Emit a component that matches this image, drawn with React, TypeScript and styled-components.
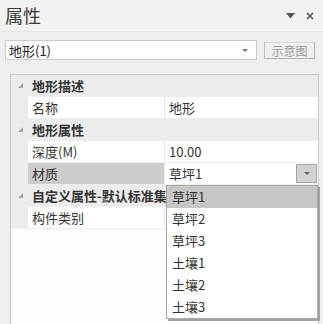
import React from 'react';
import styled, { createGlobalStyle } from 'styled-components';

const GlobalStyle = createGlobalStyle`
  html, body {
    margin: 0;
    padding: 0;
    background: #f0f0f0;
  }
  body {
    font-family: "Noto Sans CJK SC", "DejaVu Sans", sans-serif;
  }
`;

const Panel = styled.div`
  position: relative;
  width: 323px;
  height: 324px;
  background: #efefef;
  overflow: hidden;
  display: flex;
  flex-direction: column;
`;

const TitleBar = styled.div`
  height: 32px;
  display: flex;
  align-items: center;
  justify-content: space-between;
  padding: 0 9px 0 5px;
  background: #f2f2f2;
  border-bottom: 1px solid #e4e4e4;
  box-sizing: border-box;
`;

const Title = styled.div`
  font-size: 18px;
  color: #3a3a3a;
  line-height: 1;
  margin-top: -2px;
`;

const TitleTools = styled.div`
  display: flex;
  align-items: center;
  gap: 11px;
  color: #555;
`;

const Toolbar = styled.div`
  height: 36px;
  display: flex;
  align-items: center;
  padding: 0 8px 0 5px;
  gap: 7px;
  box-sizing: border-box;
`;

const Combo = styled.div`
  width: 252px;
  height: 20px;
  box-sizing: border-box;
  background: #fff;
  border: 1px solid #cbcbcb;
  display: flex;
  align-items: center;
  justify-content: space-between;
  padding: 0 8px 0 3px;
  font-size: 13px;
  color: #222;
`;

const ComboArrow = styled.span`
  width: 0;
  height: 0;
  border-left: 3px solid transparent;
  border-right: 3px solid transparent;
  border-top: 3px solid #777;
`;

const ViewButton = styled.div`
  width: 51px;
  height: 17px;
  box-sizing: border-box;
  border: 1px solid #b4b4b4;
  border-top-color: #d8d8d8;
  border-left-color: #bdbdbd;
  display: flex;
  align-items: center;
  justify-content: center;
  font-size: 12px;
  color: #9c9c9c;
  letter-spacing: 0;
`;

const GridWrap = styled.div`
  margin: 6px 4px 0 10px;
  flex: 1;
  background: #fdfdfd;
  border: 1px solid #cacaca;
  border-bottom: none;
  display: flex;
  flex-direction: column;
`;

const Row = styled.div<{ $cat?: boolean }>`
  height: 22px;
  display: flex;
  box-sizing: border-box;
  border-bottom: 1px solid #eeeeee;
  background: ${p => (p.$cat ? '#ececec' : '#fff')};
  font-size: 13px;
  line-height: 21px;
  white-space: nowrap;
`;

const Gutter = styled.div`
  width: 17px;
  flex: none;
  background: #ececec;
  display: flex;
  align-items: center;
  justify-content: center;
`;

const Expander = styled.span`
  width: 0;
  height: 0;
  margin-left: 2px;
  border-left: 5px solid transparent;
  border-bottom: 5px solid #a6a6a6;
`;

const CatLabel = styled.div`
  padding-left: 4px;
  font-weight: bold;
  color: #333;
  overflow: hidden;
`;

const NameCell = styled.div<{ $sel?: boolean }>`
  width: 137px;
  flex: none;
  box-sizing: border-box;
  padding-left: 4px;
  border-right: 1px solid #e6e6e6;
  background: ${p => (p.$sel ? '#cccccc' : '#fff')};
  color: #333;
`;

const ValueCell = styled.div`
  flex: 1;
  display: flex;
  align-items: center;
  justify-content: space-between;
  padding: 0 1px 0 4px;
  color: #333;
`;

const DropButton = styled.div`
  width: 21px;
  height: 19px;
  box-sizing: border-box;
  background: #d2d2d2;
  border: 1px solid #a4a4a4;
  display: flex;
  align-items: center;
  justify-content: center;
`;

const DropArrow = styled.span`
  width: 0;
  height: 0;
  border-left: 3px solid transparent;
  border-right: 3px solid transparent;
  border-top: 3px solid #666;
`;

const Popup = styled.div`
  position: absolute;
  left: 166px;
  top: 185px;
  width: 152px;
  box-sizing: border-box;
  background: #fff;
  border: 1px solid #a8a8a8;
  box-shadow: 2px 2px 0 #a3a3a3;
  display: flex;
  flex-direction: column;
`;

const Option = styled.div<{ $active?: boolean }>`
  height: 22px;
  line-height: 22px;
  padding-left: 5px;
  font-size: 13px;
  color: #333;
  background: ${p => (p.$active ? '#c6c6c6' : '#fff')};
`;

type Item =
  | { kind: 'cat'; label: string }
  | { kind: 'prop'; name: string; value: string; selected?: boolean };

const items: Item[] = [
  { kind: 'cat', label: '地形描述' },
  { kind: 'prop', name: '名称', value: '地形' },
  { kind: 'cat', label: '地形属性' },
  { kind: 'prop', name: '深度(M)', value: '10.00' },
  { kind: 'prop', name: '材质', value: '草坪1', selected: true },
  { kind: 'cat', label: '自定义属性-默认标准集' },
  { kind: 'prop', name: '构件类别', value: '' },
];

const options = ['草坪1', '草坪2', '草坪3', '土壤1', '土壤2', '土壤3'];

const App: React.FC = () => {
  return (
    <Panel>
      <GlobalStyle />
      <TitleBar>
        <Title>属性</Title>
        <TitleTools>
          <svg width="9" height="6" viewBox="0 0 9 6">
            <path d="M0 0 H9 L4.5 5.5 Z" fill="#555" />
          </svg>
          <svg width="8" height="8" viewBox="0 0 8 8">
            <path d="M1 1 L7 7 M7 1 L1 7" stroke="#555" strokeWidth="1.6" />
          </svg>
        </TitleTools>
      </TitleBar>
      <Toolbar>
        <Combo>
          <span>地形(1)</span>
          <ComboArrow />
        </Combo>
        <ViewButton>示意图</ViewButton>
      </Toolbar>
      <GridWrap>
        {items.map((it, i) =>
          it.kind === 'cat' ? (
            <Row key={i} $cat>
              <Gutter>
                <Expander />
              </Gutter>
              <CatLabel>{it.label}</CatLabel>
            </Row>
          ) : (
            <Row key={i}>
              <Gutter />
              <NameCell $sel={it.selected}>{it.name}</NameCell>
              <ValueCell>
                <span>{it.value}</span>
                {it.selected && (
                  <DropButton>
                    <DropArrow />
                  </DropButton>
                )}
              </ValueCell>
            </Row>
          )
        )}
      </GridWrap>
      <Popup>
        {options.map((o, i) => (
          <Option key={o} $active={i === 0}>
            {o}
          </Option>
        ))}
      </Popup>
    </Panel>
  );
};

export default App;
